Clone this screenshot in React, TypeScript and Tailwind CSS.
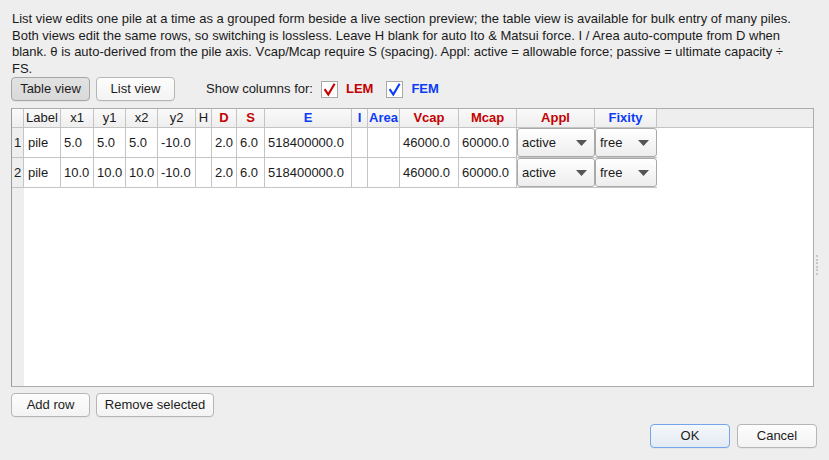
import React from "react";

const RED = "#c40000";
const BLUE = "#0b3cf5";

type Col = { key: string; label: string; w: number; color?: string; bold?: boolean };

const cols: Col[] = [
  { key: "label", label: "Label", w: 37 },
  { key: "x1", label: "x1", w: 33 },
  { key: "y1", label: "y1", w: 32 },
  { key: "x2", label: "x2", w: 32 },
  { key: "y2", label: "y2", w: 38 },
  { key: "h", label: "H", w: 16 },
  { key: "d", label: "D", w: 25, color: RED, bold: true },
  { key: "s", label: "S", w: 28, color: RED, bold: true },
  { key: "e", label: "E", w: 87, color: BLUE, bold: true },
  { key: "i", label: "I", w: 16, color: BLUE, bold: true },
  { key: "area", label: "Area", w: 32, color: BLUE, bold: true },
  { key: "vcap", label: "Vcap", w: 59, color: RED, bold: true },
  { key: "mcap", label: "Mcap", w: 58, color: RED, bold: true },
  { key: "appl", label: "Appl", w: 78, color: RED, bold: true },
  { key: "fixity", label: "Fixity", w: 62, color: BLUE, bold: true },
];

const rows: Record<string, string>[] = [
  { label: "pile", x1: "5.0", y1: "5.0", x2: "5.0", y2: "-10.0", h: "", d: "2.0", s: "6.0", e: "518400000.0", i: "", area: "", vcap: "46000.0", mcap: "60000.0", appl: "active", fixity: "free" },
  { label: "pile", x1: "10.0", y1: "10.0", x2: "10.0", y2: "-10.0", h: "", d: "2.0", s: "6.0", e: "518400000.0", i: "", area: "", vcap: "46000.0", mcap: "60000.0", appl: "active", fixity: "free" },
];

function Check({ color }: { color: string }) {
  return (
    <div className="w-[17px] h-[17px] bg-white border border-[#a9a9a9] flex items-center justify-center">
      <svg width="15" height="15" viewBox="0 0 15 15">
        <path d="M2.6 7.2 L6.3 12.6 L12.6 1.8" fill="none" stroke={color} strokeWidth="2.1" strokeLinejoin="miter" strokeLinecap="butt" />
      </svg>
    </div>
  );
}

function Btn({ children, w, pressed, def }: { children: React.ReactNode; w: number; pressed?: boolean; def?: boolean }) {
  const cls = pressed
    ? "bg-[linear-gradient(#e2e2e2,#d9d9d9)] border-[#a6a6a6]"
    : def
    ? "bg-[linear-gradient(#f5f8fc,#e3eaf3)] border-[#74a5ea]"
    : "bg-[linear-gradient(#fdfdfd,#f3f3f3)] border-[#b6b6b6]";
  return (
    <div
      style={{ width: w }}
      className={`h-[24px] rounded-[4px] border flex items-center justify-center text-[13px] text-[#1c1c1c] shadow-[0_0.5px_0.5px_rgba(0,0,0,0.08)] ${cls}`}
    >
      {children}
    </div>
  );
}

function Combo({ text }: { text: string }) {
  return (
    <div className="w-full h-full rounded-[3px] border border-[#a9a9a9] bg-[linear-gradient(#ffffff,#ededed)] flex items-center justify-between pl-[4px] pr-[7px]">
      <span>{text}</span>
      <svg width="11" height="6" viewBox="0 0 11 6">
        <path d="M0 0 L11 0 L5.5 6 Z" fill="#555555" />
      </svg>
    </div>
  );
}

export default function App() {
  return (
    <div
      className="w-[829px] h-[460px] bg-[#eeeeee] text-[#1a1a1a] flex flex-col px-[11px] overflow-hidden"
      style={{ fontFamily: '"Liberation Sans", Arial, sans-serif' }}
    >
      <div className="pt-[11px] pl-[1px] text-[13px] leading-[16.5px] h-[77px]">
        <div>List view edits one pile at a time as a grouped form beside a live section preview; the table view is available for bulk entry of many piles.</div>
        <div>Both views edit the same rows, so switching is lossless. Leave H blank for auto Ito &amp; Matsui force. I / Area auto-compute from D when</div>
        <div>blank. θ is auto-derived from the pile axis. Vcap/Mcap require S (spacing). Appl: active = allowable force; passive = ultimate capacity ÷</div>
        <div>FS.</div>
      </div>

      <div className="flex items-center h-[24px] text-[13px]">
        <Btn w={79} pressed>Table view</Btn>
        <div className="ml-[6px]">
          <Btn w={79}>List view</Btn>
        </div>
        <span className="ml-[31px]">Show columns for:</span>
        <div className="ml-[8px]">
          <Check color={RED} />
        </div>
        <span className="ml-[8px] font-bold" style={{ color: RED }}>LEM</span>
        <div className="ml-[13px]">
          <Check color={BLUE} />
        </div>
        <span className="ml-[8px] font-bold" style={{ color: BLUE }}>FEM</span>
      </div>

      <div className="flex mt-[7px]">
        <div className="w-[803px] h-[279px] border border-[#adadad] border-l-[#9a9a9a] bg-white flex flex-col text-[13px]">
          <div className="flex h-[19px] bg-[#eeeeee] border-b border-[#c4c4c4]">
            <div className="w-[12px] h-full border-r border-[#c4c4c4] bg-[linear-gradient(#fafafa,#eeeeee)]" />
            {cols.map((c) => (
              <div
                key={c.key}
                style={{ width: c.w, color: c.color }}
                className={`h-full border-r border-[#c4c4c4] bg-[linear-gradient(#fafafa,#eeeeee)] flex items-center justify-center whitespace-nowrap ${c.bold ? "font-bold" : "text-[#1a1a1a]"}`}
              >
                {c.label}
              </div>
            ))}
          </div>
          <div className="flex-1 flex">
            <div className="w-[12px] bg-[#eeeeee] flex flex-col">
              {rows.map((_, i) => (
                <div key={i} className="h-[30px] border-b border-r border-[#c4c4c4] flex items-center justify-center">
                  {i + 1}
                </div>
              ))}
            </div>
            <div className="flex flex-col">
              {rows.map((r, i) => (
                <div key={i} className="flex h-[30px] border-b border-[#c4c4c4]">
                  {cols.map((c) => (
                    <div
                      key={c.key}
                      style={{ width: c.w }}
                      className={`h-full whitespace-nowrap overflow-hidden flex items-center ${c.key === "appl" || c.key === "fixity" ? "" : "border-r border-[#c4c4c4] pl-[3px]"} ${c.key === "label" ? "pl-[4px]" : ""}`}
                    >
                      {c.key === "appl" || c.key === "fixity" ? <Combo text={r[c.key]} /> : r[c.key]}
                    </div>
                  ))}
                </div>
              ))}
            </div>
          </div>
        </div>
        <div className="ml-[2px] mt-[147px] flex flex-col gap-[1.5px]">
          {[0, 1, 2, 3, 4, 5].map((i) => (
            <div key={i} className="w-[2px] h-[2px] bg-[#c8c8c8]" />
          ))}
        </div>
      </div>

      <div className="flex mt-[6px] gap-[6px]">
        <Btn w={79}>Add row</Btn>
        <Btn w={118}>Remove selected</Btn>
      </div>

      <div className="flex justify-end mt-[7px] gap-[7px] pr-[1px]">
        <Btn w={80} def>OK</Btn>
        <Btn w={80}>Cancel</Btn>
      </div>
    </div>
  );
}
